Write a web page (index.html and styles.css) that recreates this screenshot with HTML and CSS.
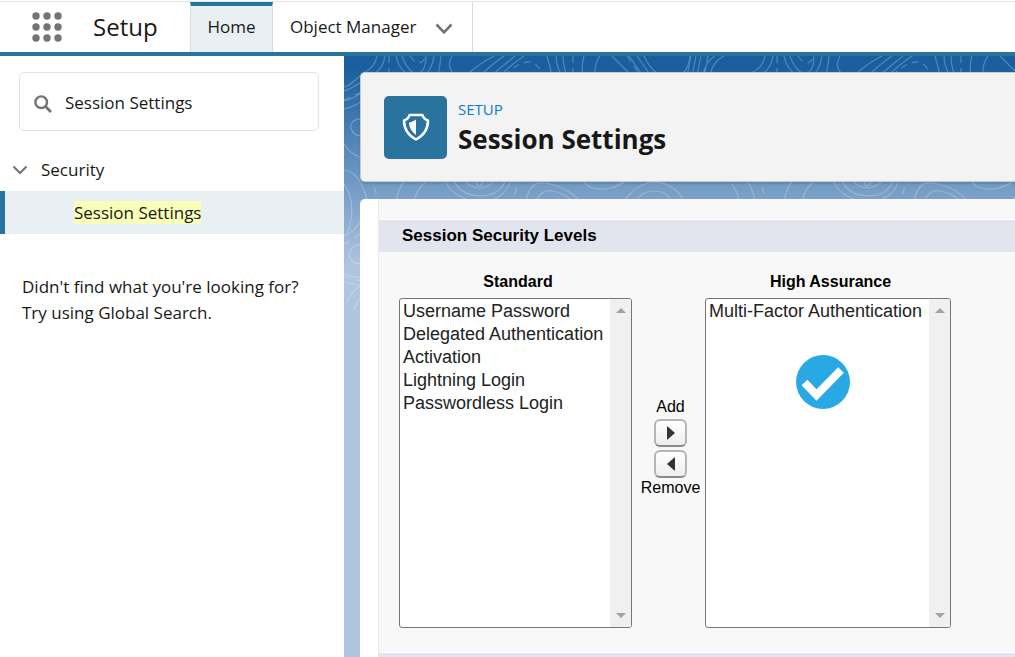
FILE: index.html
```html
<!DOCTYPE html>
<html lang="en">
<head>
<meta charset="utf-8">
<title>Session Settings | Setup</title>
<link rel="stylesheet" href="styles.css">
</head>
<body>
<header class="topbar">
  <button class="launcher" type="button" aria-label="App Launcher">
    <svg width="30" height="30" viewBox="0 0 30 30" fill="#747474"><circle cx="4" cy="4" r="3.7"/><circle cx="15" cy="4" r="3.7"/><circle cx="26" cy="4" r="3.7"/><circle cx="4" cy="15" r="3.7"/><circle cx="15" cy="15" r="3.7"/><circle cx="26" cy="15" r="3.7"/><circle cx="4" cy="26" r="3.7"/><circle cx="15" cy="26" r="3.7"/><circle cx="26" cy="26" r="3.7"/></svg>
  </button>
  <span class="app-name">Setup</span>
  <nav class="tabs">
    <a class="tab tab-active" href="#home">Home</a>
    <div class="tab tab-menu">
      <a class="tab-link" href="#objects">Object Manager</a>
      <button class="chevron" type="button" aria-label="Object Manager menu">
        <svg width="18" height="12" viewBox="0 0 18 12" fill="none" stroke="#747474" stroke-width="2.6"><path d="M1.5 1.5 9 9.3l7.5-7.8"/></svg>
      </button>
    </div>
  </nav>
</header>
<div class="layout">
  <aside class="sidebar">
    <label class="search">
      <svg width="18" height="18" viewBox="0 0 18 18" fill="none" stroke="#747474"><circle cx="7.2" cy="7.2" r="5.8" stroke-width="2.4"/><path d="M11.5 11.5 17 17" stroke-width="2.8"/></svg>
      <input class="search-input" type="text" value="Session Settings" aria-label="Quick Find">
    </label>
    <button class="tree-parent" type="button">
      <svg width="16" height="10" viewBox="0 0 16 10" fill="none" stroke="#747474" stroke-width="2"><path d="m1.5 1.5 6.500 6.500 6.500-6.500"/></svg>
      Security
    </button>
    <a class="tree-item" href="#session"><mark class="hit">Session Settings</mark></a>
    <p class="hint">Didn't find what you're looking for?<br>Try using Global Search.</p>
  </aside>
  <main class="content">
    <svg class="contours" width="100%" height="300" aria-hidden="true">
      <defs>
        <pattern id="topo" width="388" height="300" patternUnits="userSpaceOnUse">
          <g fill="none" stroke="#fff" stroke-opacity=".24" stroke-width="1.2">
            <path d="M33 0q-2 12-14 17Q6 30 0 31M41 0q-2 14-12 18Q10 32 0 35M52 0q3 14 14 20h14q8-6 10-20M58 0q4 12 12 17 12 2 12-17M97 0q-1 10-3 20M108 0q-6 10 2 18M150 0q-16 8-28 20M160 0q-12 8-24 20M171 0q-10 8-24 20M180 0q-12 8-24 20M203 0q3 10 5 20M212 0q0 10 6 20M219 0q0 10 4 20M240 0q-3 10-1 20M256 0q-6 8-5 20M268 0l20 20M285 0l14 20M293 0l14 20M300 0q10 22 28 22Q344 20 346 0M347 0l-4 20M352 0l-4 20M357 0l-4 20M371 0q-10 6-12 20M380 0q-12 6-14 20"/>
            <path d="M0 45q10-2 18-9M0 53q10-2 20-9M20 63Q6 62 7 72q3 10 13 7M0 88q6 10 18 14M0 114q16 2 23 30M0 128q14 20 3 50M52 145q3-16 12-24M70 148q2-20 20-26M100 120q5 24 40 26 24-4 28-26M108 120q6 20 30 20 22-2 24-20M118 120q6 12 18 12 14-2 16-12M134 122q-3 5 0 8 6 0 4-8M182 145q4-20 18-18 20 2 36 18M192 145q6-12 16-10 12 2 20 10M240 122q0 12 22 11 15-2 24-13M280 145q10-14 24-18 24-4 36 18M292 145q6-10 18-10 12 0 18 10M0 180q10-4 18-16M18 187Q4 192 5 200q4 10 13 7M0 218q8 3 18 4M0 226l18 4M3 246q6-14 15-16M10 254q2-8 8-12"/>
            <path stroke-dasharray="7 5" d="M45 0v22M66 0q10 14 16 0M160 20q16-16 28-14 8 4 10 14M229 0v22M283 0l14 20M364 0l-4 20M0 44l18-8M26 120l10 28M176 120l-7 24M0 188q10-4 18-13M0 221l18 4"/>
          </g>
        </pattern>
      </defs>
      <rect width="100%" height="300" fill="url(#topo)"/>
    </svg>
    <section class="page-head">
      <span class="head-icon">
        <svg width="28" height="28" viewBox="0 0 28 28"><path d="M7.500 2h13q1 4 5.500 5.500Q26 20 14 26.500 2 20 2 7.500 6.500 6 7.500 2z" fill="none" stroke="#fff" stroke-width="2.500" stroke-linejoin="round"/><path d="M14 6.500v15.500Q7 17 7 9.500q3.500-.5 7-3z" fill="#fff"/></svg>
      </span>
      <div class="head-text">
        <p class="eyebrow">SETUP</p>
        <h1 class="title">Session Settings</h1>
      </div>
    </section>
    <section class="card">
      <div class="detail">
        <h2 class="section-title">Session Security Levels</h2>
        <div class="picker">
          <div class="group">
            <label class="group-label" for="standard">Standard</label>
            <div class="listbox">
              <select class="list" id="standard" multiple>
                <option>Username Password</option>
                <option>Delegated Authentication</option>
                <option>Activation</option>
                <option>Lightning Login</option>
                <option>Passwordless Login</option>
              </select>
              <span class="scroll"><i class="up"></i><i class="down"></i></span>
            </div>
          </div>
          <div class="mover">
            <label for="add">Add</label>
            <button class="move" id="add" type="button"><svg width="8" height="14" viewBox="0 0 8 14"><path d="M0 0l8 7-8 7z" fill="#333435"/></svg></button>
            <button class="move" id="remove" type="button"><svg width="8" height="14" viewBox="0 0 8 14"><path d="M8 0L0 7l8 7z" fill="#333435"/></svg></button>
            <label for="remove">Remove</label>
          </div>
          <div class="group">
            <label class="group-label" for="high">High Assurance</label>
            <div class="listbox listbox-wide">
              <select class="list" id="high" multiple>
                <option>Multi-Factor Authentication</option>
              </select>
              <span class="scroll"><i class="up"></i><i class="down"></i></span>
              <svg class="check" width="54" height="54" viewBox="0 0 54 54"><circle cx="27" cy="27" r="27" fill="#29a9e4"/><path d="M8.500 27.500 20.500 40 45 15" fill="none" stroke="#fff" stroke-width="8"/></svg>
            </div>
          </div>
        </div>
        <div class="next-section"></div>
      </div>
    </section>
  </main>
</div>
</body>
</html>
```
FILE: styles.css
```css
* { box-sizing: border-box; }
body { margin: 0; height: 100vh; overflow: hidden; display: flex; flex-direction: column; background: #fff; color: #181818; font: 17px/26px "Open Sans", "Noto Sans", sans-serif; }
button { border: 0; padding: 0; background: none; font: inherit; color: inherit; }
a { color: inherit; text-decoration: none; }
p, h1, h2 { margin: 0; }
svg { display: block; flex: none; }

.topbar { display: flex; align-items: stretch; height: 55px; margin-top: 1px; border-top: 1px solid #e5e5e5; border-bottom: 4px solid #2a739e; flex: none; }
.launcher { margin-left: 32px; width: 30px; }
.app-name { width: 128px; padding-left: 31px; font-size: 24px; line-height: 50px; }
.tabs { display: flex; line-height: 50px; }
.tab-active { width: 83px; text-align: center; line-height: 42px; border: 1px solid #dddbda; border-top: 4px solid #2a739e; border-bottom: 0; background: #e8f0f3; }
.tab-menu { display: flex; align-items: center; gap: 19px; padding: 0 19px 0 17px; border-right: 1px solid #dddbda; }
.chevron { padding-top: 3px; }

.layout { display: flex; flex: 1; min-height: 0; }
.sidebar { width: 344px; flex: none; padding-top: 16px; }
.search { display: flex; align-items: center; gap: 13px; height: 59px; margin: 0 25px 0 19px; padding: 2px 14px 0; border: 1px solid #e2e2e2; border-radius: 5px; }
.search svg { margin-top: 3px; }
.search-input { flex: 1; min-width: 0; border: 0; padding: 0; outline: 0; font: inherit; color: inherit; background: none; }
.tree-parent { display: flex; align-items: center; gap: 13px; width: 100%; height: 44px; margin-top: 16px; padding: 2px 12px 0; }
.tree-item { display: flex; align-items: center; height: 43px; padding-left: 69px; border-left: 5px solid #2a739e; background: #e8f0f3; }
.hit { background: #f9ffb8; color: inherit; line-height: 23px; }
.hint { padding: 40px 22px; }

.content { position: relative; isolation: isolate; flex: 1; min-width: 0; display: flex; flex-direction: column; gap: 17px; padding: 16px 0 0 16px; background: linear-gradient(#195f9f 0, #195f9f 12px, #b0c4df 210px); }
.contours { position: absolute; inset: 0; z-index: -1; }
.page-head { display: flex; align-items: center; gap: 11px; height: 110px; padding: 0 23px; border: 1px solid #c9c9c9; border-right: 0; border-radius: 5px 0 0 5px; background: #f3f3f3; box-shadow: 0 2px 2px rgba(0,0,0,.12); flex: none; }
.head-icon { display: grid; place-items: center; width: 63px; height: 63px; border-radius: 5px; background: #2a739e; }
.head-text { padding-top: 4px; }
.eyebrow { font-size: 15px; line-height: 20px; color: #0b7bd1; }
.title { font-size: 26px; line-height: 40px; font-weight: 700; }

.card { flex: 1; display: flex; padding-left: 18px; border-radius: 5px 0 0 0; background: #fff; font-family: "Liberation Sans", Arial, sans-serif; color: #000; }
.detail { flex: 1; padding-top: 20px; border-left: 1px solid #eaeaea; background: #f8f8f8; display: flex; flex-direction: column; }
.section-title { height: 33px; border-top: 1px solid #fff; padding-left: 23px; font-size: 17px; line-height: 32px; background: #e3e5ee; }
.picker { display: flex; padding: 18px 20px 0; }
.group { display: flex; flex-direction: column; text-align: center; }
.group-label { font-size: 16px; line-height: 24px; font-weight: 700; margin-bottom: 4px; padding-left: 5px; }
.listbox { position: relative; display: flex; width: 233px; height: 330px; border: 1px solid #767676; border-radius: 3px; background: #fff; overflow: hidden; }
.listbox-wide { width: 246px; }
.list { flex: 1; min-width: 0; height: 100%; border: 0; padding: 0; outline: 0; background: none; color: #222; font: 18px/23px "Liberation Sans", Arial, sans-serif; overflow: hidden; text-align: left; }
.list option { padding: 2px 0 0 3px; min-height: 23px; }
.scroll { width: 21px; display: flex; flex-direction: column; justify-content: space-between; align-items: center; padding: 9px 0; background: #f0f0f0; }
.up, .down { border: 5px solid transparent; }
.up { border-top: 0; border-bottom-color: #a3a3a3; }
.down { border-bottom: 0; border-top-color: #a3a3a3; }
.check { position: absolute; left: 90px; top: 56px; }
.mover { width: 73px; padding: 127px 0 0 4px; display: flex; flex-direction: column; align-items: center; gap: 3px; font-size: 16px; line-height: 24px; }
.mover label { line-height: 19px; }
.move { display: grid; place-items: center; width: 33px; height: 28px; border: 2px solid #b5b5b5; border-bottom-color: #8a8a8a; border-radius: 6px; background: linear-gradient(#fff, #eee); }
.mover label:last-child { line-height: 14px; }
.next-section { margin-top: 24px; flex: 1; border-top: 1px solid #fff; background: #e3e5ee; }
```
